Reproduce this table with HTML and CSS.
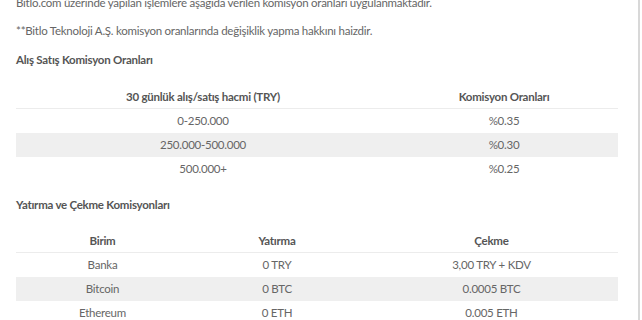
FILE: index.html
```html
<!DOCTYPE html>
<html lang="tr">
<head>
<meta charset="utf-8">
<link rel="stylesheet" href="styles.css">
</head>
<body>
<div class="frame">
  <div class="content">
    <p class="text">Bitlo.com üzerinde yapılan işlemlere aşağıda verilen komisyon oranları uygulanmaktadır.</p>
    <p class="text note">**Bitlo Teknoloji A.Ş. komisyon oranlarında değişiklik yapma hakkını haizdir.</p>
    <h3 class="heading">Alış Satış Komisyon Oranları</h3>
    <table class="rates">
      <colgroup><col class="c-vol"><col class="c-rate"></colgroup>
      <thead><tr><th>30 günlük alış/satış hacmi (TRY)</th><th>Komisyon Oranları</th></tr></thead>
      <tbody>
        <tr><td>0-250.000</td><td>%0.35</td></tr>
        <tr class="odd"><td>250.000-500.000</td><td>%0.30</td></tr>
        <tr><td>500.000+</td><td>%0.25</td></tr>
      </tbody>
    </table>
    <h3 class="heading second">Yatırma ve Çekme Komisyonları</h3>
    <table class="rates">
      <colgroup><col class="c-unit"><col class="c-dep"><col class="c-wd"></colgroup>
      <thead><tr><th>Birim</th><th>Yatırma</th><th>Çekme</th></tr></thead>
      <tbody>
        <tr><td>Banka</td><td>0 TRY</td><td>3,00 TRY + KDV</td></tr>
        <tr class="odd"><td>Bitcoin</td><td>0 BTC</td><td>0.0005 BTC</td></tr>
        <tr><td>Ethereum</td><td>0 ETH</td><td>0.005 ETH</td></tr>
      </tbody>
    </table>
  </div>
</div>
</body>
</html>
```
FILE: styles.css
```css
html, body {
  margin: 0;
  padding: 0;
  background: #fff;
  overflow: hidden;
}
body {
  font-family: Lato, "Open Sans", sans-serif;
  font-size: 11.5px;
  letter-spacing: -0.25px;
  color: #666;
}
.frame {
  width: 638px;
  height: 320px;
  border-right: 2px solid #d8d8d8;
  overflow: hidden;
}
.content {
  margin-top: -6px;
  padding-left: 16px;
  width: 602px;
}
.text {
  margin: 0 0 10px 0;
  line-height: 18px;
}
.note {
  margin-bottom: 11px;
}
.heading {
  margin: 0 0 16px 0;
  font-size: 11.5px;
  line-height: 18px;
  font-weight: 700;
  color: #555;
}
.heading.second {
  margin-top: 15px;
  margin-bottom: 15px;
}
.rates {
  width: 602px;
  border-collapse: collapse;
  table-layout: fixed;
}
.c-vol { width: 374px; }
.c-rate { width: 228px; }
.c-unit { width: 173px; }
.c-dep { width: 176px; }
.c-wd { width: 253px; }
.rates th,
.rates td {
  padding: 0;
  height: 24px;
  text-align: center;
  vertical-align: middle;
  line-height: 18px;
}
.rates th {
  font-weight: 700;
  color: #555;
  height: 23px;
  border-bottom: 1px solid #ececec;
}
.rates tr.odd td {
  background: #efefef;
}
```
